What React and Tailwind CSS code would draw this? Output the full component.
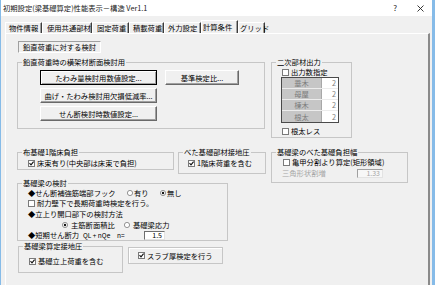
import React from 'react';

const FONT = "font-['Noto_Sans_CJK_JP','Noto_Sans',sans-serif]";

const tabs = [
  { label: '物件情報', cls: 'w-[37px] pl-[3px]' },
  { label: '使用共通部材', cls: 'w-[50px] pl-[4px]' },
  { label: '固定荷重', cls: 'w-[37px] pl-[4px]' },
  { label: '積載荷重', cls: 'w-[35px] pl-[3px]' },
  { label: '外力設定', cls: 'w-[37px] pl-[3px]' },
  { label: '計算条件', cls: 'w-[37px] pl-[1px]', active: true },
  { label: 'グリッド', cls: 'w-[27px] pl-[1px]' },
];

function Check({ on }) {
  return (
    <svg width="7" height="7" viewBox="0 0 7 7" className="shrink-0">
      <rect x="0.5" y="0.5" width="6" height="6" fill="#fff" stroke="#7a7a7a" />
      {on && <path d="M1.5 3.2 L3 4.8 L5.6 1.7" fill="none" stroke="#111" strokeWidth="1.1" />}
    </svg>
  );
}

function Radio({ on }) {
  return (
    <svg width="6" height="6" viewBox="0 0 6 6" className="shrink-0">
      <circle cx="3" cy="3" r="2.6" fill="#fff" stroke="#7a7a7a" strokeWidth="0.8" />
      {on && <circle cx="3" cy="3" r="1.2" fill="#111" />}
    </svg>
  );
}

function Group({ label, className, children }) {
  return (
    <fieldset className={`border border-[#c6c6c6] ${className}`}>
      <legend className="ml-[4px] px-[1px] leading-[10px]">{label}</legend>
      {children}
    </fieldset>
  );
}

function Btn({ children, className, primary }) {
  return (
    <div
      className={`flex h-[15px] items-center justify-center bg-[#f0f0f0] ${
        primary
          ? 'border border-black shadow-[inset_1px_1px_0_#fff,inset_-1px_-1px_0_#a0a0a0]'
          : 'border border-t-white border-l-white border-b-[#696969] border-r-[#696969] shadow-[inset_-1px_-1px_0_#a0a0a0]'
      } ${className}`}
    >
      {children}
    </div>
  );
}

function CheckRow({ on, label, className }) {
  return (
    <div className={`flex h-[10px] items-center gap-[2px] ${className}`}>
      <Check on={on} />
      <span className="whitespace-nowrap">{label}</span>
    </div>
  );
}

export default function App() {
  return (
    <div className={`h-[285px] w-[435px] overflow-hidden border-l border-r-[3px] border-[#86bbe8] bg-[#f0f0f0] text-[7.3px] leading-[10px] text-black ${FONT}`}>
      {/* title bar */}
      <div className="flex h-[16px] items-center bg-white pl-[2px] pr-[8px]">
        <span className="whitespace-nowrap text-[#1a1a1a]">初期設定(梁基礎算定)性能表示－構造 Ver1.1</span>
        <span className="ml-auto text-[8px] text-[#222]">?</span>
        <svg width="7" height="7" viewBox="0 0 7 7" className="ml-[20px]">
          <path d="M0.5 0.5 L6.5 6.5 M6.5 0.5 L0.5 6.5" stroke="#222" strokeWidth="0.9" />
        </svg>
      </div>

      {/* tabs */}
      <div className="flex h-[17px] items-end pl-[4px]">
        {tabs.map((t) => (
          <div
            key={t.label}
            className={`flex items-center whitespace-nowrap border-l border-t border-r border-l-white border-t-white border-r-[#3c3c3c] shadow-[inset_-1px_0_0_#a0a0a0] ${t.cls} ${
              t.active ? 'h-[13px] items-start pt-[1px]' : 'h-[11px]'
            }`}
          >
            {t.label}
          </div>
        ))}
      </div>

      {/* tab panel */}
      <div className="ml-[4px] h-[252px] w-[425px] border-l border-r-2 border-t border-l-white border-r-[#8a8a8a] border-t-white pl-[11px] pt-[7px]">
        <div className="ml-[1px] flex h-[12px] w-[83px] items-center justify-center border border-t-[#a0a0a0] border-l-[#a0a0a0] border-b-white border-r-white">
          鉛直荷重に対する検討
        </div>

        <div className="mt-[4px] flex items-start gap-[4px]">
          {/* left column */}
          <div className="flex w-[249px] flex-col">
            <Group label="鉛直荷重時の横架材断面検討用" className="h-[72px] w-[248px]">
              <div className="flex flex-col gap-[3px] pl-[22px] pt-[3px]">
                <div className="flex gap-[8px]">
                  <Btn primary className="w-[117px]">たわみ量検討用数値設定...</Btn>
                  <Btn className="w-[74px]">基準検定比...</Btn>
                </div>
                <Btn className="w-[117px]">曲げ・たわみ検討用欠損低減率...</Btn>
                <Btn className="w-[117px]">せん断検討時数値設定...</Btn>
              </div>
            </Group>

            <div className="mt-[18px] flex items-start gap-[4px]">
              <Group label="布基礎1階床負担" className="h-[23px] w-[157px]">
                <CheckRow on label="床束有り(中央部は床束で負担)" className="ml-[10px] mt-[1px]" />
              </Group>
              <Group label="べた基礎部材接地圧" className="h-[27px] w-[88px]">
                <CheckRow on label="1階床荷重を含む" className="ml-[9px] mt-[1px]" />
              </Group>
            </div>

            <Group label="基礎梁の検討" className="mt-[4px] h-[63px] w-[211px]">
              <div className="flex flex-col pl-[10px]">
                <div className="flex h-[10px] items-center">
                  <span className="w-[99px] whitespace-nowrap">◆せん断補強筋端部フック</span>
                  <div className="flex w-[33px] items-center gap-[1px]">
                    <Radio />
                    <span>有り</span>
                  </div>
                  <div className="flex items-center gap-[1px]">
                    <Radio on />
                    <span>無し</span>
                  </div>
                </div>
                <CheckRow label="耐力壁下で長期荷重時検定を行う。" className="h-[9px]" />
                <div className="mt-[1px] flex h-[10px] items-center whitespace-nowrap">◆立上り開口部下の検討方法</div>
                <div className="mt-[1px] flex h-[10px] items-center">
                  <div className="ml-[34px] flex w-[62px] items-center gap-[3px]">
                    <Radio on />
                    <span className="whitespace-nowrap">主筋断面積比</span>
                  </div>
                  <div className="flex items-center gap-[3px]">
                    <Radio />
                    <span className="whitespace-nowrap">基礎梁応力</span>
                  </div>
                </div>
                <div className="flex h-[10px] items-center whitespace-nowrap">
                  <span className="w-[55px]">◆短期せん断力</span>
                  <span className="w-[34px] text-[6.5px]">QL + nQe</span>
                  <span className="w-[27px] text-[6.5px]">n=</span>
                  <div className="flex h-[9px] w-[21px] items-center justify-end border border-t-[#6d6d6d] border-l-[#6d6d6d] border-b-[#e3e3e3] border-r-[#e3e3e3] bg-white pr-[2px] text-[7px]">
                    1.5
                  </div>
                </div>
              </div>
            </Group>

            <div className="flex items-start">
              <Group label="基礎梁算定接地圧" className="ml-[1px] h-[32px] w-[105px]">
                <CheckRow on label="基礎立上荷重を含む" className="ml-[10px] mt-[5px]" />
              </Group>
              <div className="ml-[5px] mt-[6px] flex h-[17px] w-[95px] items-center border border-[#c6c6c6] pl-[9px] shadow-[inset_1px_1px_0_#fff]">
                <CheckRow on label="スラブ厚検定を行う" />
              </div>
            </div>
          </div>

          {/* right column */}
          <div className="ml-[1px] flex w-[137px] flex-col">
            <Group label="二次部材出力" className="h-[81px] w-[81px]">
              <CheckRow label="出力数指定" className="ml-[10px] h-[9px]" />
              <div className="ml-[9px] w-[58px] border border-[#4a4a4a]">
                {['垂木', '母屋', '棟木', '根太'].map((r, i) => (
                  <div key={r} className={`flex h-[11px] ${i < 3 ? 'border-b border-[#ececec]' : ''}`}>
                    <div className="flex w-[40px] items-center justify-center border-r border-[#a8a8a8] bg-[#c6c6c6] text-[#7c7c7c]">{r}</div>
                    <div className="flex flex-1 items-center justify-end bg-white pr-[2px] text-[#7c7c7c]">2</div>
                  </div>
                ))}
              </div>
              <CheckRow label="根太レス" className="ml-[10px] mt-[3px]" />
            </Group>

            <Group label="基礎梁のべた基礎負担幅" className="mt-[9px] h-[36px] w-[137px]">
              <CheckRow label="亀甲分割より算定(矩形領域)" className="ml-[11px]" />
              <div className="mt-[1px] flex h-[10px] items-center pl-[10px]">
                <span className="w-[75px] whitespace-nowrap text-[#a6a6a6]">三角形状割増</span>
                <div className="flex h-[9px] w-[26px] items-center justify-end border border-t-[#a0a0a0] border-l-[#a0a0a0] border-b-[#e3e3e3] border-r-[#e3e3e3] bg-[#f7f7f7] pr-[2px] text-[7px] text-[#a6a6a6]">
                  1.33
                </div>
              </div>
            </Group>
          </div>
        </div>
      </div>
    </div>
  );
}
